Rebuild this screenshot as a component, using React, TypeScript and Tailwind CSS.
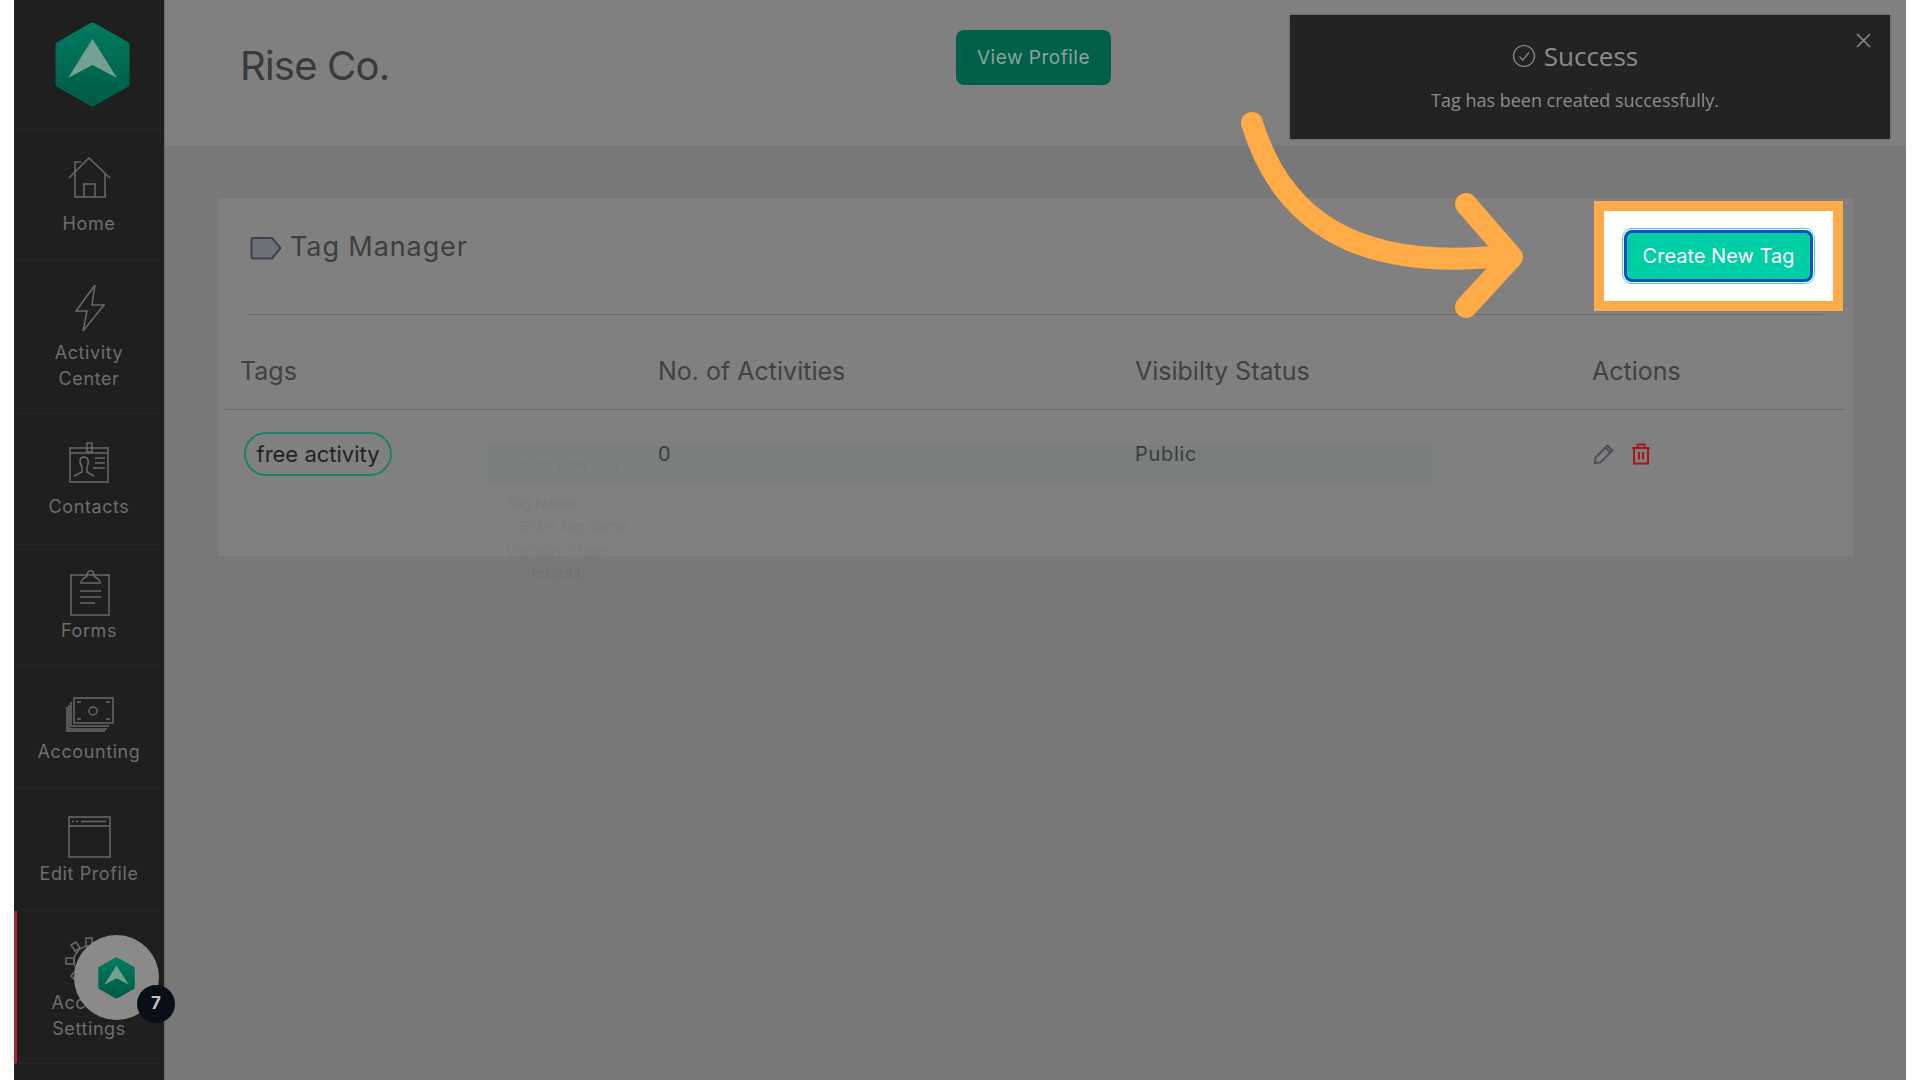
import { ReactNode } from "react";

const montserrat = "font-['Inter','Liberation_Sans',sans-serif]";

function Hex({ size }: { size: number }) {
  return (
    <svg width={size} height={(size * 85) / 75} viewBox="0 0 75 85">
      <defs>
        <linearGradient id={`hex${size}`} x1="0" y1="0" x2="0" y2="1">
          <stop offset="0" stopColor="#007a60" />
          <stop offset="1" stopColor="#005b48" />
        </linearGradient>
      </defs>
      <path
        d="M37.5 4 L71 23 V62 L37.5 81 L4 62 V23 Z"
        fill={`url(#hex${size})`}
        stroke={`url(#hex${size})`}
        strokeWidth="7"
        strokeLinejoin="round"
      />
      <path d="M37.5 17 L13 56 L37.5 43 L62 56 Z" fill="#74a094" />
    </svg>
  );
}

const iconProps = {
  fill: "none",
  stroke: "#6a6a6a",
  strokeWidth: 1.5,
};

function HomeIcon() {
  return (
    <svg className="ml-[2px]" width="44" height="44" viewBox="0 0 44 44" {...iconProps}>
      <path d="M1 22 L21 2 L42 22" />
      <path d="M7 17 V41 H37 V17" />
      <path d="M16 41 V28 H27 V41" />
      <path d="M7 17 V6 H13" />
    </svg>
  );
}

function BoltIcon() {
  return (
    <svg className="ml-[2px]" width="32" height="48" viewBox="0 0 32 48" {...iconProps}>
      <path d="M21 1 L2 27 H13 L9 47 L30 21 H18 Z" />
    </svg>
  );
}

function ContactsIcon() {
  return (
    <svg className="ml-[2px]" width="44" height="42" viewBox="0 0 44 42" {...iconProps}>
      <path d="M2 6 H40 V40 H2 Z" />
      <path d="M2 11 H40" />
      <path d="M19 1 H24 V10 H19 Z" />
      <path d="M6 34 L14 30 V25 C11 21 11 15 16 15 C21 15 21 21 19 25 V30 L26 34" />
      <path d="M27 16 H37 M27 21 H37 M25 26 H37" />
    </svg>
  );
}

function FormsIcon() {
  return (
    <svg className="ml-[1px]" width="42" height="48" viewBox="0 0 42 48" {...iconProps}>
      <path d="M2 6 H40 V46 H2 Z" />
      <path d="M12 14 C12 9 17 9 18 7 C18 0 25 0 25 7 C26 9 31 9 31 14 Z" />
      <path d="M11 22 H32 M11 28 H32 M11 34 H26" />
    </svg>
  );
}

function MoneyIcon() {
  return (
    <svg className="ml-[1px]" width="48" height="36" viewBox="0 0 48 36" {...iconProps}>
      <path d="M8 1 H47 V26 H8 Z" />
      <circle cx="27" cy="14" r="4" />
      <path d="M11 5 H15 M40 5 H44 M11 22 H15 M40 22 H44" />
      <path d="M5 5 V29 H43" />
      <path d="M3 8 V32 H41" />
      <path d="M1 10 V34 H39" />
    </svg>
  );
}

function BrowserIcon() {
  return (
    <svg className="ml-[2px]" width="44" height="42" viewBox="0 0 44 42" {...iconProps}>
      <path d="M1 1 H42 V41 H1 Z" />
      <path d="M1 10 H42" />
      <path d="M4 5.5 H6 M8 5.5 H10 M13 5.5 H38" />
    </svg>
  );
}

function GearIcon() {
  return (
    <svg width="48" height="48" viewBox="0 0 48 48" {...iconProps}>
      <circle cx="24" cy="24" r="15" />
      <path d="M21 1 H27 V9 H21 Z" />
      <path d="M6 8 L11 5 L15 11 L10 14 Z" />
      <path d="M1 21 H9 V27 H1 Z" />
      <path d="M6 39 L11 33 L15 37 L10 43 Z" />
    </svg>
  );
}

function NavItem({
  label,
  icon,
  className,
  active,
}: {
  label: ReactNode;
  icon: ReactNode;
  className: string;
  active?: boolean;
}) {
  return (
    <div
      className={`flex flex-col items-center border-b border-[#262626] ${
        active ? "border-l-[3px] border-l-[#a3292f] pr-[3px]" : ""
      } ${className}`}
    >
      {icon}
      <div className="text-center text-[18px] leading-[26px] tracking-[0.6px] text-[#6e6e6e]">{label}</div>
    </div>
  );
}

function Sidebar() {
  return (
    <aside className="flex w-[151px] shrink-0 flex-col border-r border-[#6a6a6a] bg-[#1f1f1f]">
      <div className="flex h-[130px] items-center justify-center border-b border-[#262626] pb-[1px] pl-[7px]">
        <Hex size={75} />
      </div>
      <NavItem className="h-[130px] gap-[11px] pt-[26px]" icon={<HomeIcon />} label="Home" />
      <NavItem
        className="h-[154px] gap-[8px] pt-[24px]"
        icon={<BoltIcon />}
        label={
          <>
            Activity
            <br />
            Center
          </>
        }
      />
      <NavItem className="h-[131px] gap-[10px] pt-[28px]" icon={<ContactsIcon />} label="Contacts" />
      <NavItem className="h-[121px] gap-[1px] pt-[24px]" icon={<FormsIcon />} label="Forms" />
      <NavItem className="h-[122px] gap-[6px] pt-[31px]" icon={<MoneyIcon />} label="Accounting" />
      <NavItem className="h-[123px] gap-[3px] pt-[28px]" icon={<BrowserIcon />} label="Edit Profile" />
      <NavItem
        active
        className="h-[153px] gap-[5px] pt-[26px]"
        icon={<GearIcon />}
        label={
          <>
            Account
            <br />
            Settings
          </>
        }
      />
      <div className="flex-1" />
    </aside>
  );
}

function TagTable() {
  return (
    <div>
      <div className="mx-[7px] grid h-[95px] grid-cols-[418px_477px_457px_1fr] items-center border-b border-[#6c6c6c] pl-[15px] pt-[20px] text-[25px] text-[#414141]">
        <div>Tags</div>
        <div>No. of Activities</div>
        <div>Visibilty Status</div>
        <div>Actions</div>
      </div>
      <div className="relative z-10 mx-[7px] grid h-[90px] grid-cols-[418px_477px_457px_1fr] items-center pb-[2px] pl-[15px] text-[20px] tracking-[0.7px] text-[#3c3c3c]">
        <div>
          <span className="ml-[4px] inline-flex h-[44px] w-[148px] items-center justify-center rounded-full border-2 border-[#1b806b] text-[22px] tracking-normal text-[#222222]">
            free activity
          </span>
        </div>
        <div>0</div>
        <div>Public</div>
        <div className="ml-[1px] flex items-center gap-[16px]">
          <svg width="22" height="22" viewBox="0 0 22 22" fill="none" stroke="#484c54" strokeWidth="1.8">
            <path d="M2 20 L2.5 14.5 L14.5 2.5 L19.5 7.5 L7.5 19.5 Z" />
            <path d="M12.5 4.5 L17.5 9.5" />
          </svg>
          <svg width="20" height="22" viewBox="0 0 20 22" fill="none" stroke="#a3171f" strokeWidth="2">
            <path d="M1 5 H19 M6.5 5 V1.5 H13.5 V5" />
            <path d="M3 5 V20.5 H17 V5" />
            <path d="M8 9 V16.5 M12 9 V16.5" />
          </svg>
        </div>
      </div>
    </div>
  );
}

function GhostModal() {
  return (
    <div className="absolute left-[487px] top-[445px] w-[946px] text-[15px] text-[#7b7b7b]">
      <div className="flex h-[41px] items-center bg-[#7a7e7c] px-[18px] text-[#777c7a]">Create New Tag</div>
      <div className="px-[18px] pt-[10px] leading-[16px]">Tag Name</div>
      <div className="mx-[18px] mt-[2px] h-[26px] border border-[#7e7e7e] px-[14px] leading-[24px]">Enter tag name</div>
      <div className="px-[18px] pt-[4px] leading-[16px]">Visibility Status</div>
      <div className="mx-[18px] mt-[1px] flex h-[27px] items-center justify-between border border-[#767676] pl-[26px] pr-[8px] text-[#727272]">
        <span>Internal</span>
        <span className="text-[10px]">⌄</span>
      </div>
    </div>
  );
}

function Toast() {
  return (
    <div className="absolute left-[1290px] top-[15px] flex h-[124px] w-[600px] flex-col items-center bg-[#232323] pr-[30px] pt-[25px] font-['Open_Sans',sans-serif] text-[#8c8c8c] shadow-[0_0_3px_rgba(0,0,0,0.3)]">
      <div className="flex h-[32px] items-center gap-[8px] text-[26px]">
        <svg width="24" height="24" viewBox="0 0 24 24" fill="none" stroke="#8c8c8c" strokeWidth="1.2">
          <circle cx="12" cy="12" r="10.5" />
          <path d="M7.5 12.5 L10.8 16 L17 8.5" />
        </svg>
        Success
      </div>
      <div className="mt-[16px] text-[18px] leading-[24px]">Tag has been created successfully.</div>
      <svg
        className="absolute right-[19px] top-[18px]"
        width="15"
        height="15"
        viewBox="0 0 15 15"
        fill="none"
        stroke="#8c8c8c"
        strokeWidth="1.5"
      >
        <path d="M1 1 L14 14 M14 1 L1 14" />
      </svg>
    </div>
  );
}

function Highlight() {
  return (
    <>
      <div className="absolute left-[1594px] top-[201px] flex h-[110px] w-[249px] items-center justify-center border-[10px] border-[#ffab47] bg-white">
        <button className="h-[52px] w-[189px] rounded-[8px] border-[3px] border-[#0f4fc0] bg-[#00cfa5] text-[20px] text-white outline outline-offset-1 outline-[#3fd8c0]">
          Create New Tag
        </button>
      </div>
      <svg className="absolute left-[1230px] top-[100px]" width="300" height="230" viewBox="1230 100 300 230" fill="none">
        <path
          d="M1252 123 C1280 215, 1350 272, 1502 256 M1466 204 L1512 257 L1466 307"
          stroke="#ffab47"
          strokeWidth="22"
          strokeLinecap="round"
          strokeLinejoin="round"
        />
      </svg>
    </>
  );
}

function Launcher() {
  return (
    <div className="absolute left-[74px] top-[935px] flex h-[85px] w-[85px] items-center justify-center rounded-full bg-[#8a8a8a]">
      <Hex size={37} />
      <div className="absolute left-[63px] top-[50px] flex h-[38px] w-[38px] items-center justify-center rounded-full bg-[#0a0e18] text-[17px] font-bold text-[#c4c4c4]">
        7
      </div>
    </div>
  );
}

export default function App() {
  return (
    <div className={`relative h-[1080px] w-[1920px] overflow-hidden bg-white pl-[14px] pr-[14px] ${montserrat}`}>
      <div className="flex h-full">
        <Sidebar />
        <main className="flex min-w-0 flex-1 flex-col bg-[#787878]">
          <header className="flex h-[146px] shrink-0 items-start bg-[#808080] pl-[75px]">
            <h1 className="w-[716px] pt-[41px] text-[40px] leading-[50px] tracking-[-0.8px] text-[#3a3a3a]">Rise Co.</h1>
            <button className="mt-[30px] h-[55px] w-[155px] rounded-[8px] bg-[#00604a] pt-[2px] text-[19px] tracking-[0.5px] text-[#8aa59d]">
              View Profile
            </button>
          </header>
          <section className="mx-[53px] mt-[52px] h-[358px] bg-[#808080]">
            <div className="mx-[30px] flex h-[117px] items-start gap-[8px] border-b border-[#6c6c6c] pt-[33px] pl-[2px] text-[27px] leading-[32px] tracking-[0.9px] text-[#3e3e3e]">
              <svg className="mt-[5px]" width="32" height="24" viewBox="0 0 32 24" fill="#6d7178" stroke="#3e434c" strokeWidth="2">
                <path d="M1.5 4 Q1.5 2 3.5 2 H22 L30.5 12 L22 22.5 H3.5 Q1.5 22.5 1.5 20.5 Z" strokeLinejoin="round" />
              </svg>
              Tag Manager
            </div>
            <TagTable />
          </section>
        </main>
      </div>
      <GhostModal />
      <Toast />
      <Highlight />
      <Launcher />
    </div>
  );
}
